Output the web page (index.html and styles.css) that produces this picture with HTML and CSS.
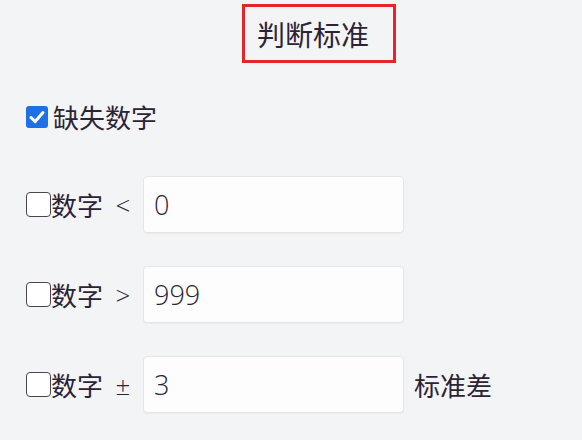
FILE: index.html
```html
<!DOCTYPE html>
<html lang="zh-CN">
<head>
<meta charset="utf-8">
<title>判断标准</title>
<link rel="stylesheet" href="styles.css">
</head>
<body>
<main class="panel">
  <div class="title-wrap">
    <div class="title">判断标准</div>
  </div>

  <div class="row row-missing">
    <span class="cb cb-checked">
      <svg viewBox="0 0 22 22" width="22" height="22" aria-hidden="true">
        <path d="M5 11.5 L9.2 15.6 L17 6.6" fill="none" stroke="#ffffff" stroke-width="3" stroke-linecap="round" stroke-linejoin="round"/>
      </svg>
    </span>
    <span class="lbl">缺失数字</span>
  </div>

  <div class="row">
    <span class="cb"></span>
    <span class="lbl">数字</span>
    <span class="op">&lt;</span>
    <div class="input">0</div>
  </div>

  <div class="row">
    <span class="cb"></span>
    <span class="lbl">数字</span>
    <span class="op">&gt;</span>
    <div class="input">999</div>
  </div>

  <div class="row">
    <span class="cb"></span>
    <span class="lbl">数字</span>
    <span class="op">±</span>
    <div class="input">3</div>
    <span class="suffix">标准差</span>
  </div>
</main>
</body>
</html>
```

FILE: styles.css
```css
html, body {
  margin: 0;
  padding: 0;
  background: #f3f4f6;
}

body {
  width: 582px;
  height: 440px;
  overflow: hidden;
  font-family: "Open Sans", "Noto Sans CJK SC", sans-serif;
  color: #2c2335;
}

.panel {
  display: flex;
  flex-direction: column;
  padding: 4px 0 0 26px;
}

.title-wrap {
  display: flex;
  padding-left: 216px;
}

.title {
  box-sizing: border-box;
  width: 154px;
  height: 59px;
  border: 3px solid #e3242b;
  display: flex;
  align-items: center;
  padding-left: 12px;
  font-family: "Noto Sans CJK SC", sans-serif;
  font-size: 28px;
}

.row {
  display: flex;
  align-items: center;
  height: 57px;
  margin-top: 33px;
}

.row-missing {
  margin-top: 25px;
}

.row-missing + .row {
  margin-top: 31px;
}

.cb {
  box-sizing: border-box;
  width: 25px;
  height: 25px;
  border: 1.5px solid #4a4452;
  border-radius: 4px;
  background: #ffffff;
  flex: none;
}

.cb-checked {
  width: 22px;
  height: 22px;
  border: none;
  border-radius: 3px;
  background: #1f6fe5;
  margin-right: 5px;
  display: flex;
}

.lbl {
  font-family: "Noto Sans CJK SC", sans-serif;
  font-size: 26px;
  line-height: 1;
}

.op {
  width: 40px;
  text-align: center;
  font-size: 26px;
  font-weight: 300;
  line-height: 1;
}

.input {
  box-sizing: border-box;
  width: 261px;
  height: 57px;
  background: #fdfdfe;
  border: 1px solid #e4e6ea;
  border-radius: 4px;
  box-shadow: 0 1px 1px rgba(0, 0, 0, 0.04);
  display: flex;
  align-items: center;
  padding-left: 10px;
  font-size: 27px;
  font-weight: 300;
  line-height: 1;
}

.suffix {
  margin-left: 10px;
  font-family: "Noto Sans CJK SC", sans-serif;
  font-size: 26px;
  line-height: 1;
}
```
